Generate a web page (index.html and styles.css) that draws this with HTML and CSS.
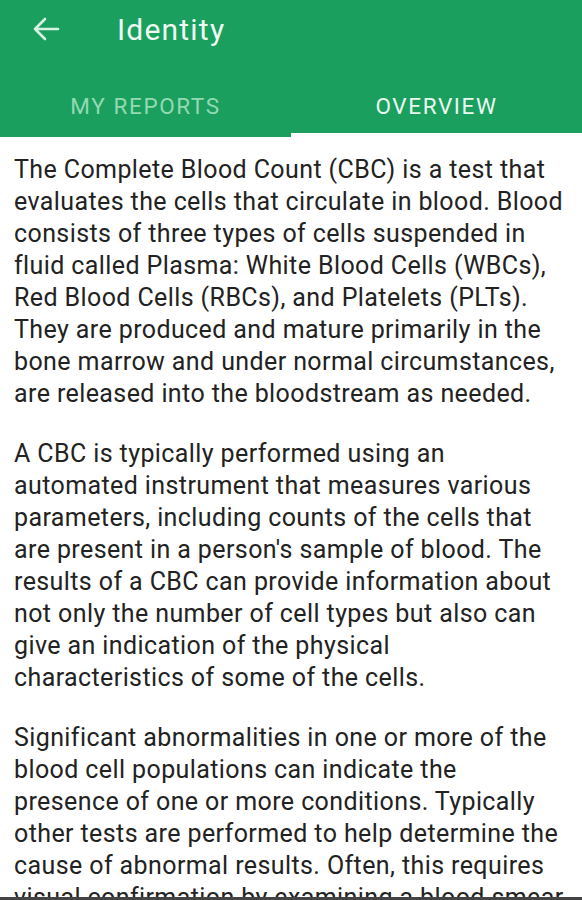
FILE: index.html
```html
<!DOCTYPE html>
<html>
<head>
<meta charset="utf-8">
<link rel="stylesheet" href="styles.css">
</head>
<body>
<div class="app">
  <header class="appbar">
    <div class="toolbar">
      <svg class="back" width="28" height="24" viewBox="0 0 28 24"><path d="M26 12H3M13 2L3 12l10 10" fill="none" stroke="#d8f2e2" stroke-width="2.6" stroke-linecap="round" stroke-linejoin="round"/></svg>
      <h1 class="title">Identity</h1>
    </div>
    <nav class="tabs">
      <div class="tab">MY REPORTS</div>
      <div class="tab active">OVERVIEW</div>
    </nav>
  </header>
  <main class="content">
    <p>The Complete Blood Count (CBC) is a test that<br>evaluates the cells that circulate in blood. Blood<br>consists of three types of cells suspended in<br>fluid called Plasma: White Blood Cells (WBCs),<br>Red Blood Cells (RBCs), and Platelets (PLTs).<br>They are produced and mature primarily in the<br>bone marrow and under normal circumstances,<br>are released into the bloodstream as needed.</p>
    <p>A CBC is typically performed using an<br>automated instrument that measures various<br>parameters, including counts of the cells that<br>are present in a person's sample of blood. The<br>results of a CBC can provide information about<br>not only the number of cell types but also can<br>give an indication of the physical<br>characteristics of some of the cells.</p>
    <p>Significant abnormalities in one or more of the<br>blood cell populations can indicate the<br>presence of one or more conditions. Typically<br>other tests are performed to help determine the<br>cause of abnormal results. Often, this requires<br>visual confirmation by examining a blood smear<br>under a microscope.</p>
  </main>
</div>
</body>
</html>
```
FILE: styles.css
```css
html, body {
  margin: 0;
  padding: 0;
  background: #ffffff;
}
.app {
  width: 582px;
  height: 900px;
  overflow: hidden;
  font-family: Roboto, "Noto Sans", sans-serif;
  border-bottom: 3px solid #444;
  box-sizing: border-box;
}
.appbar {
  background: #1a9f5f;
}
.toolbar {
  height: 62px;
  display: flex;
  align-items: center;
  padding-left: 32px;
}
.back {
  display: block;
  margin-top: -4px;
}
.title {
  margin: -4px 0 0 57px;
  font-weight: 400;
  font-size: 30px;
  letter-spacing: 1.2px;
  color: #eefaf2;
}
.tabs {
  display: flex;
  height: 75px;
}
.tab {
  flex: 1;
  display: flex;
  align-items: center;
  justify-content: center;
  font-size: 22.5px;
  letter-spacing: 1.6px;
  color: #93d9b2;
  padding-top: 17px;
  box-sizing: border-box;
  border-bottom: 4px solid transparent;
}
.tab.active {
  color: #eaf9ef;
  border-bottom-color: #ffffff;
}
.content {
  padding: 17px 14px 0 14px;
  color: #222222;
  font-size: 25px;
  letter-spacing: 0.4px;
  line-height: 32px;
}
.content p {
  margin: 0 0 28px 0;
  white-space: nowrap;
}
```
